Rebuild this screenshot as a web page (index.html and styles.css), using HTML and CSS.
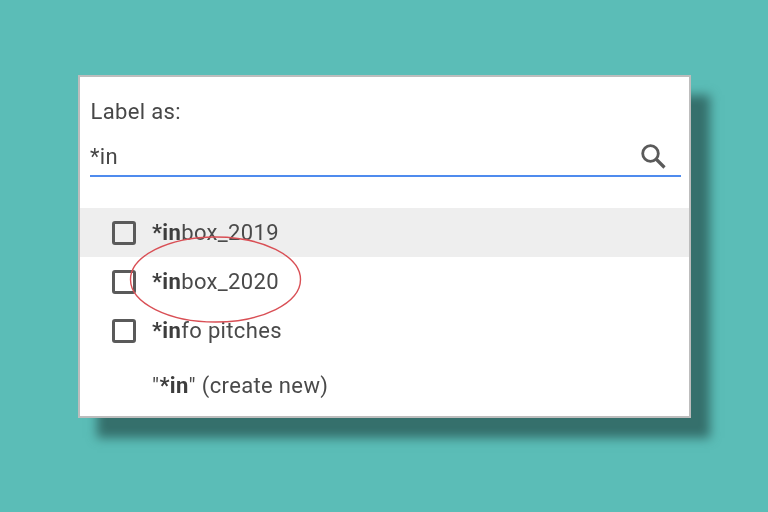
FILE: index.html
```html
<!DOCTYPE html>
<html lang="en">
<head>
<meta charset="utf-8">
<title>Label as</title>
<link rel="stylesheet" href="styles.css">
</head>
<body>
<div class="dialog">
  <div class="title">Label as:</div>
  <div class="search">
    <span class="query">*in</span>
    <svg class="search-icon" width="30" height="30" viewBox="0 0 30 30" fill="none" stroke="#5a5a5a" aria-hidden="true">
      <circle cx="11.500" cy="11.500" r="7.800" stroke-width="2.800"/>
      <path d="M17 17l8.500 8.500" stroke-width="3.200"/>
    </svg>
  </div>
  <ul class="list">
    <li class="row row-active"><span class="box"></span><span class="text"><b>*in</b>box_2019</span></li>
    <li class="row"><span class="box"></span><span class="text"><b>*in</b>box_2020</span></li>
    <li class="row"><span class="box"></span><span class="text"><b>*in</b>fo pitches</span></li>
    <li class="row row-new"><span class="text">"<b>*in</b>" (create new)</span></li>
  </ul>
  <svg class="circle" width="176" height="90" viewBox="0 0 176 90" fill="none" aria-hidden="true">
    <ellipse cx="87.500" cy="44.500" rx="85" ry="42.500" stroke="#d94f55" stroke-width="1.400"/>
  </svg>
</div>
</body>
</html>
```
FILE: styles.css
```css
* { box-sizing: border-box; }
html, body { height: 100%; }
body {
  margin: 0;
  width: 768px;
  height: 512px;
  overflow: hidden;
  background: #5bbdb7;
  padding: 75px 0 0 78px;
  font-family: Roboto, "Liberation Sans", sans-serif;
  color: #4a4a4a;
}
.dialog {
  position: relative;
  width: 613px;
  height: 343px;
  background: #fff;
  border: 2px solid #bdbdbd;
  padding: 21px 0 0;
  box-shadow: 19px 20px 10px #35706c;
  filter: blur(0.4px);
}
.title {
  font-size: 22px;
  line-height: 28px;
  margin-left: 10.500px;
  letter-spacing: 0.35px;
  color: #474747;
}
.search {
  display: flex;
  align-items: center;
  justify-content: space-between;
  height: 40px;
  margin: 11px 8px 0 10px;
  border-bottom: 2px solid #4f8bee;
  font-size: 22px;
  letter-spacing: 0.35px;
  color: #474747;
}
.search-icon { transform: translate(-12px, 1px); }
.list {
  list-style: none;
  margin: 31px 0 0;
  padding: 0;
}
.row {
  display: flex;
  align-items: center;
  height: 49px;
  padding-left: 32px;
  font-size: 22px;
  letter-spacing: 0.35px;
}
.row-active { background: #eeeeee; }
.row-new { height: 60px; padding-left: 72px; }
.box {
  width: 24px;
  height: 24px;
  border: 3px solid #5a5a5a;
  border-radius: 3px;
  margin-right: 16px;
  flex: none;
}
.text b { font-weight: 700; color: #3d3d3d; }
.circle {
  position: absolute;
  left: 48px;
  top: 158px;
}
```
